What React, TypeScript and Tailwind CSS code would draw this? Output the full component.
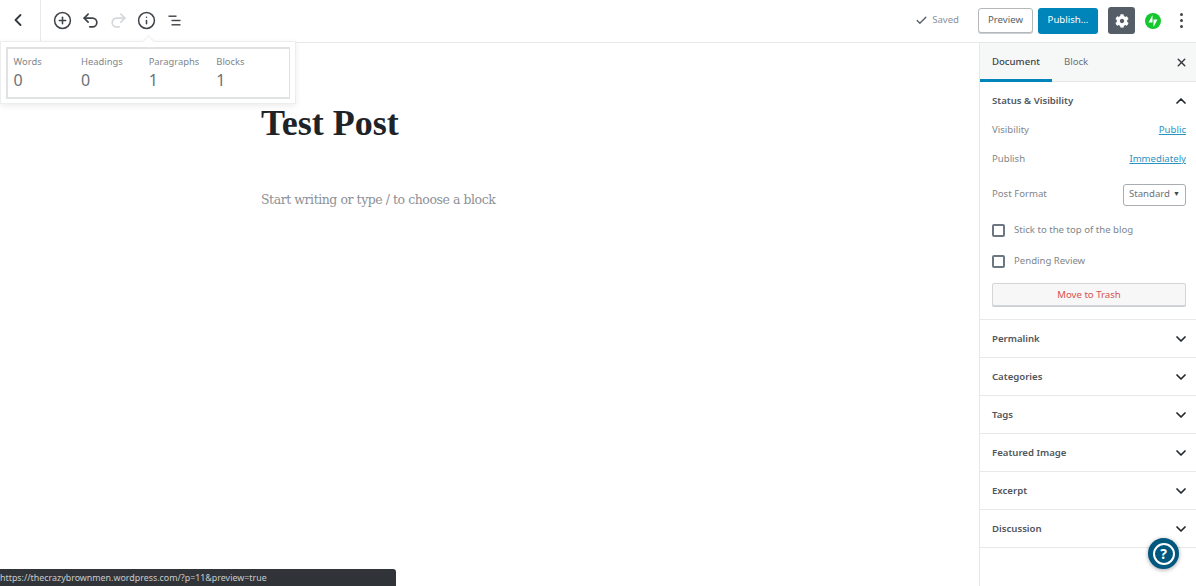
import React from 'react';
import { ChevronDown, ChevronLeft, ChevronUp, Check, CirclePlus, Info, Undo2, Redo2, X } from 'lucide-react';
import { FaCog } from 'react-icons/fa';

const stats = [
  { label: 'Words', value: 0 },
  { label: 'Headings', value: 0 },
  { label: 'Paragraphs', value: 1 },
  { label: 'Blocks', value: 1 },
];

const panels = ['Permalink', 'Categories', 'Tags', 'Featured Image', 'Excerpt', 'Discussion'];

// 顶部工具栏
function Toolbar() {
  return (
    <header className="h-[43px] shrink-0 flex items-center border-b border-[#e6e8e9] bg-white">
      <div className="w-[41px] h-[42px] flex items-center justify-center border-r border-[#e6e8e9]">
        <ChevronLeft className="w-[20px] h-[20px] text-[#32373c] mr-[5px] mb-[2px]" strokeWidth={2.2} />
      </div>
      <div className="flex items-center pl-[12px] gap-[9px] mb-[2px] text-[#3d4349]">
        <CirclePlus className="w-[19px] h-[19px]" strokeWidth={1.9} />
        <Undo2 className="w-[19px] h-[19px]" strokeWidth={2.1} />
        <Redo2 className="w-[19px] h-[19px] text-[#d5d8da]" strokeWidth={2.1} />
        <Info className="w-[19px] h-[19px]" strokeWidth={1.9} />
        <svg viewBox="0 0 19 19" className="w-[19px] h-[19px]" fill="currentColor">
          <rect x="3.5" y="4.5" width="8" height="1.4" />
          <rect x="6.5" y="8.8" width="9" height="1.4" />
          <rect x="6.5" y="13.1" width="9" height="1.4" />
        </svg>
      </div>
      <div className="ml-auto flex items-center mb-[1px]">
        <Check className="w-[13px] h-[13px] text-[#555d66]" strokeWidth={2.4} />
        <span className="ml-[4px] text-[9.6px] text-[#8b9197]">Saved</span>
        <button className="ml-[19px] w-[55px] h-[25px] border border-[#b5b8bb] rounded-[3px] bg-white text-[9.6px] text-[#555d66] shadow-[0_1px_0_#ccd0d4]">
          Preview
        </button>
        <button className="ml-[5px] w-[60px] h-[26px] rounded-[3px] bg-[#0085ba] text-[9.6px] text-white">
          Publish...
        </button>
        <div className="ml-[10px] w-[27px] h-[27px] rounded-[3px] bg-[#555d66] flex items-center justify-center">
          <FaCog className="w-[14px] h-[14px] text-white" />
        </div>
        <svg viewBox="0 0 32 32" className="ml-[10px] w-[16px] h-[16px]">
          <circle cx="16" cy="16" r="16" fill="#13c72c" />
          <polygon points="15,4 15,19 7,19" fill="#fff" />
          <polygon points="17,28 17,13 25,13" fill="#fff" />
        </svg>
        <div className="w-[30px] flex flex-col items-center gap-[3px] ml-[5px]">
          <span className="w-[3px] h-[3px] rounded-full bg-[#40464d]" />
          <span className="w-[3px] h-[3px] rounded-full bg-[#40464d]" />
          <span className="w-[3px] h-[3px] rounded-full bg-[#40464d]" />
        </div>
      </div>
    </header>
  );
}

function Sidebar() {
  return (
    <aside className="w-[217px] shrink-0 border-l border-[#e6e8e9] text-[9.6px] bg-white">
      <div className="h-[39px] flex items-stretch bg-[#f6f7f7] border-b border-[#e6e8e9]">
        <div className="w-[72px] flex items-center pl-[12px] font-medium text-[#3d4349] border-b-[3px] border-[#0085ba] pt-[3px] h-[39px]">
          Document
        </div>
        <div className="flex items-center pl-[12px] text-[#6c7278]">Block</div>
        <X className="ml-auto mr-[8px] self-center w-[13px] h-[13px] text-[#32373c]" strokeWidth={2.6} />
      </div>

      <section className="h-[238px] border-b border-[#e6e8e9] pl-[12px] pr-[10px]">
        <div className="h-[38px] flex items-center justify-between font-semibold text-[#50565c]">
          Status &amp; Visibility
          <ChevronUp className="w-[16px] h-[16px] text-[#23282d] mr-[-3px]" strokeWidth={2.6} />
        </div>
        <div className="flex justify-between h-[29px] pt-[3px] text-[#80868b]">
          <span>Visibility</span>
          <span className="text-[#2b93bf] underline">Public</span>
        </div>
        <div className="flex justify-between h-[34px] pt-[3px] text-[#80868b]">
          <span>Publish</span>
          <span className="text-[#2b93bf] underline">Immediately</span>
        </div>
        <div className="flex justify-between items-center h-[25px] mt-[-1px] text-[#80868b]">
          <span>Post Format</span>
          <div className="w-[63px] h-[22px] border border-[#a9adb1] rounded-[3px] flex items-center justify-between px-[5px] text-[#6c7278]">
            Standard
            <span className="text-[7px] text-[#40464d]">▼</span>
          </div>
        </div>
        <div className="flex items-center h-[16px] mt-[15px] text-[#80868b]">
          <span className="w-[13px] h-[13px] border-2 border-[#6c7781] rounded-[2px] mr-[9px]" />
          Stick to the top of the blog
        </div>
        <div className="flex items-center h-[16px] mt-[15px] text-[#80868b]">
          <span className="w-[13px] h-[13px] border-2 border-[#6c7781] rounded-[2px] mr-[9px]" />
          Pending Review
        </div>
        <button className="w-full h-[23px] mt-[14px] pt-[1px] border border-[#d3d5d7] rounded-[2px] bg-[#f7f7f7] text-[#d94f4f] shadow-[0_1px_0_#ccd0d4]">
          Move to Trash
        </button>
      </section>

      {panels.map((title) => (
        <div
          key={title}
          className="h-[38px] border-b border-[#e6e8e9] pl-[12px] pr-[7px] flex items-center justify-between font-semibold text-[#50565c]"
        >
          <span className="mt-[1px]">{title}</span>
          <ChevronDown className="w-[16px] h-[16px] text-[#23282d]" strokeWidth={2.6} />
        </div>
      ))}
    </aside>
  );
}

export default function App() {
  return (
    <div className="relative w-[1196px] h-[586px] overflow-hidden bg-white flex flex-col font-['Noto_Sans',sans-serif]">
      <Toolbar />

      <div className="flex flex-1 min-h-0">
        <main className="flex-1 pl-[261px] font-['Liberation_Serif',serif]">
          <h1 className="mt-[56px] text-[36px] leading-[48px] font-bold text-[#1e2327]">Test Post</h1>
          <p className="mt-[41px] text-[12.5px] leading-[24px] text-[#8d9196] font-['DejaVu_Serif',serif] tracking-[-0.45px]">
            Start writing or type / to choose a block
          </p>
        </main>
        <Sidebar />
      </div>

      {/* 信息弹出层 */}
      <div className="absolute left-0 top-[41px] w-[296px] h-[63px] bg-white border border-[#eceded] shadow-[0_2px_6px_rgba(0,0,0,0.08)] p-[5px]">
        <span className="absolute left-[143px] top-[-5px] w-[9px] h-[9px] rotate-45 bg-white border-l border-t border-[#eceded]" />
        <div className="h-[52px] flex border-2 border-[#dfe1e2] border-r-[1px] pl-[5.5px] pt-[5px]">
          {stats.map((s) => (
            <div key={s.label} className="w-[67.6px] text-[#80868b]">
              <div className="text-[9.4px] leading-[15px]">{s.label}</div>
              <div className="text-[16px] leading-[22px] text-[#6c7278]">{s.value}</div>
            </div>
          ))}
        </div>
      </div>

      {/* 浏览器状态栏 */}
      <div className="absolute left-0 bottom-0 w-[396px] h-[17px] bg-[#303438] rounded-tr-[3px] text-[8.9px] leading-[17px] text-[#c9cbcd] whitespace-nowrap">
        https://thecrazybrownmen.wordpress.com/?p=11&amp;preview=true
      </div>

      {/* 帮助按钮 */}
      <div className="absolute left-[1148px] top-[538px] w-[31px] h-[31px] rounded-full bg-[#00587f] shadow-[0_1px_4px_rgba(0,0,0,0.35)] flex items-center justify-center">
        <div className="w-[22px] h-[22px] rounded-full border-2 border-white flex items-center justify-center text-white text-[14px] font-bold leading-none">
          ?
        </div>
      </div>
    </div>
  );
}
